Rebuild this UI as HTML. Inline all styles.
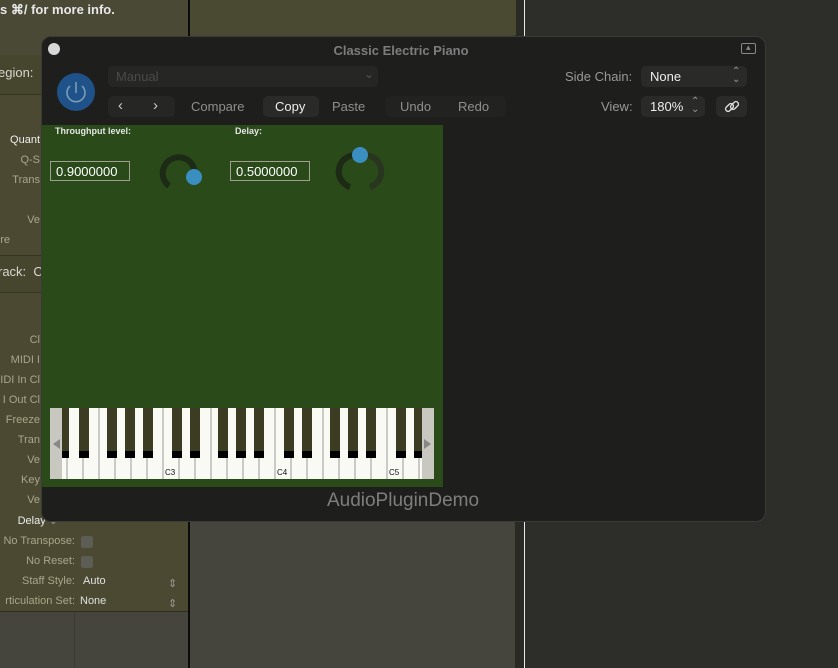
<!DOCTYPE html>
<html><head><meta charset="utf-8"><style>
*{margin:0;padding:0;box-sizing:border-box}
body{width:838px;height:668px;overflow:hidden;background:#2c2c27;font-family:"Liberation Sans",sans-serif;position:relative}
.a{position:absolute}
.lbl{position:absolute;color:#a9a68c;font-size:11px;text-align:right;white-space:nowrap}
.bt{position:absolute;color:#8f8f8f;font-size:13px}
</style></head><body>
<div class="a" style="left:0;top:0;width:188px;height:612px;background:#4b4932"></div>
<div class="a" style="left:0;top:612px;width:188px;height:56px;background:#46453d"></div>
<div class="a" style="left:74px;top:612px;width:1px;height:56px;background:#3a3a33"></div>
<div class="a" style="left:0;top:611px;width:188px;height:1px;background:#2e2d22"></div>
<div class="a" style="left:188px;top:0;width:2px;height:668px;background:#0c0c0a"></div>
<div class="a" style="left:190px;top:0;width:325px;height:668px;background:#45443d"></div>
<div class="a" style="left:515px;top:0;width:9px;height:668px;background:#2a2a25"></div>
<div class="a" style="left:524px;top:0;width:1px;height:668px;background:#e8e8e8"></div>
<div class="a" style="left:525px;top:0;width:313px;height:668px;background:#2d2d29"></div>
<div class="a" style="left:190px;top:0;width:326px;height:35px;background:#4a4932"></div>
<div class="a" style="left:0;top:0;width:188px;height:55px;background:#4a4935"></div>
<div class="a" style="left:0;top:2px;color:#e8e8e8;font-size:13px;font-weight:bold">s ⌘/ for more info.</div>
<div class="a" style="left:0;top:55px;width:188px;height:40px;background:#46452e;border-bottom:1px solid #36351f"></div>
<div class="a" style="left:-2px;top:65px;color:#d8d8d0;font-size:13px">egion:</div>
<div class="a" style="left:0;top:255px;width:188px;height:38px;background:#46452e;border-top:1px solid #36351f;border-bottom:1px solid #36351f"></div>
<div class="a" style="left:-2px;top:264px;color:#d8d8d0;font-size:13px">rack:&nbsp; C</div>
<div class="lbl" style="left:0;width:40px;top:134px;color:#eee">Quant</div>
<div class="lbl" style="left:0;width:40px;top:154px">Q-S</div>
<div class="lbl" style="left:0;width:40px;top:174px">Trans</div>
<div class="lbl" style="left:0;width:40px;top:214px">Ve</div>
<div class="lbl" style="left:0;width:10px;top:234px">re</div>
<div class="lbl" style="left:0;width:40px;top:334px">Cl</div>
<div class="lbl" style="left:0;width:40px;top:354px">MIDI I</div>
<div class="lbl" style="left:0;width:40px;top:374px">IDI In Cl</div>
<div class="lbl" style="left:0;width:40px;top:394px">I Out Cl</div>
<div class="lbl" style="left:0;width:40px;top:414px">Freeze</div>
<div class="lbl" style="left:0;width:40px;top:434px">Tran</div>
<div class="lbl" style="left:0;width:40px;top:454px">Ve</div>
<div class="lbl" style="left:0;width:40px;top:474px">Key</div>
<div class="lbl" style="left:0;width:40px;top:494px">Ve</div>
<div class="lbl" style="left:0;width:58px;top:514px;color:#eee">Delay <span style="color:#999">⌄</span></div>
<div class="lbl" style="left:0;width:75px;top:535px">No Transpose:</div>
<div class="a" style="left:81px;top:536px;width:12px;height:12px;background:#5d5c55;border-radius:2px"></div>
<div class="lbl" style="left:0;width:75px;top:555px">No Reset:</div>
<div class="a" style="left:81px;top:556px;width:12px;height:12px;background:#5d5c55;border-radius:2px"></div>
<div class="lbl" style="left:0;width:75px;top:575px">Staff Style:</div>
<div class="a" style="left:83px;top:575px;color:#e0e0e0;font-size:11px">Auto</div>
<div class="lbl" style="left:0;width:75px;top:595px">rticulation Set:</div>
<div class="a" style="left:80px;top:595px;color:#e0e0e0;font-size:11px">None</div>
<div class="a" style="left:168px;top:574px;color:#999;font-size:11px;line-height:20px">⇕<br>⇕</div>

<div class="a" style="left:41px;top:36px;width:725px;height:486px;background:#1e1e1c;border-radius:10px;border:1px solid #3a3a36"></div>
<div class="a" style="left:48px;top:43px;width:12px;height:12px;border-radius:50%;background:#d8d8d8"></div>
<div class="a" style="left:0;width:800px;top:43px;text-align:center;color:#7d7d7d;font-size:13px;font-weight:bold;padding-left:2px">Classic Electric Piano</div>
<div class="a" style="left:741px;top:43px;width:15px;height:11px;border:1.5px solid #888;border-radius:2px"></div>
<div class="a" style="left:746px;top:42px;color:#888;font-size:9px">▴</div>
<div class="a" style="left:57px;top:73px;width:38px;height:38px;border-radius:50%;background:#1f5288"></div>
<svg class="a" style="left:57px;top:73px" width="38" height="38"><path d="M13 13 A9 9 0 1 0 25 13" fill="none" stroke="#7a9cb8" stroke-width="1.6"/><line x1="19" y1="9" x2="19" y2="20" stroke="#7a9cb8" stroke-width="1.6"/></svg>
<div class="a" style="left:108px;top:66px;width:270px;height:21px;background:#262624;border-radius:5px"></div>
<div class="a" style="left:116px;top:69px;color:#4a4a48;font-size:13px">Manual</div>
<div class="a" style="left:364px;top:67px;color:#555;font-size:12px">⌄</div>
<div class="a" style="left:108px;top:96px;width:67px;height:21px;background:#262624;border-radius:5px"></div>
<div class="bt" style="left:118px;top:97px;color:#ccc;font-size:15px">‹</div>
<div class="bt" style="left:153px;top:97px;color:#ccc;font-size:15px">›</div>
<div class="bt" style="left:191px;top:99px">Compare</div>
<div class="a" style="left:263px;top:96px;width:56px;height:21px;background:#2a2a28;border-radius:5px"></div>
<div class="bt" style="left:275px;top:99px;color:#eee">Copy</div>
<div class="bt" style="left:332px;top:99px">Paste</div>
<div class="a" style="left:385px;top:96px;width:121px;height:21px;background:#222220;border-radius:5px"></div>
<div class="bt" style="left:400px;top:99px">Undo</div>
<div class="bt" style="left:458px;top:99px">Redo</div>
<div class="bt" style="left:565px;top:69px;color:#999">Side Chain:</div>
<div class="a" style="left:641px;top:66px;width:106px;height:21px;background:#2a2a28;border-radius:5px"></div>
<div class="bt" style="left:650px;top:69px;color:#eee">None</div>
<div class="a" style="left:732px;top:68px;color:#999;font-size:10px;line-height:8px">⌃<br>⌄</div>
<div class="bt" style="left:601px;top:99px;color:#999">View:</div>
<div class="a" style="left:641px;top:96px;width:64px;height:21px;background:#2a2a28;border-radius:5px"></div>
<div class="bt" style="left:650px;top:99px;color:#eee">180%</div>
<div class="a" style="left:691px;top:98px;color:#999;font-size:10px;line-height:8px">⌃<br>⌄</div>
<div class="a" style="left:716px;top:96px;width:31px;height:21px;background:#2a2a28;border-radius:5px"></div>
<svg class="a" style="left:724px;top:99px" width="16" height="16"><g fill="none" stroke="#ddd" stroke-width="1.4"><rect x="1" y="6" width="9" height="5" rx="2.5" transform="rotate(-45 5.5 8.5)"/><rect x="6" y="4" width="9" height="5" rx="2.5" transform="rotate(-45 10.5 6.5)"/></g></svg>

<div class="a" style="left:42px;top:125px;width:401px;height:362px;background:#2a4a1a"></div>
<div class="a" style="left:55px;top:126px;color:#e6e6e6;font-size:9px;font-weight:bold">Throughput level:</div>
<div class="a" style="left:235px;top:126px;color:#e6e6e6;font-size:9px;font-weight:bold">Delay:</div>
<div class="a" style="left:50px;top:161px;width:80px;height:20px;border:1px solid #a0a090;color:#fff;font-size:13px;padding:2px 0 0 5px">0.9000000</div>
<div class="a" style="left:230px;top:161px;width:80px;height:20px;border:1px solid #a0a090;color:#fff;font-size:13px;padding:2px 0 0 5px">0.5000000</div>
<svg class="a" style="left:150px;top:140px" width="240" height="60">
<path d="M19 46 A16 16 0 1 1 44 38" fill="none" stroke="#1c2a16" stroke-width="6"/>
<circle cx="44" cy="37" r="8" fill="#3a8fc0"/>
<path d="M200 47 A16 16 0 0 1 210 16" fill="none" stroke="#1c2a16" stroke-width="6"/>
<path d="M210 16 A16 16 0 0 1 220 47" fill="none" stroke="#28361f" stroke-width="6"/>
<circle cx="210" cy="15" r="8" fill="#3a8fc0"/>
</svg>
<div class="a" style="left:50px;top:408px;width:384px;height:71px;background:#fafaf4;overflow:hidden">
<svg width="384" height="71">
<rect x="0" y="0" width="12" height="71" fill="#c8c8c0"/>
<rect x="372" y="0" width="12" height="71" fill="#c8c8c0"/>
<path d="M3 36 L10 31 L10 41Z" fill="#888"/>
<path d="M381 36 L374 31 L374 41Z" fill="#888"/>
<g stroke="#999" stroke-width="1">
<line x1="17" y1="0" x2="17" y2="71"/><line x1="33" y1="0" x2="33" y2="71"/><line x1="49" y1="0" x2="49" y2="71"/><line x1="65" y1="0" x2="65" y2="71"/><line x1="81" y1="0" x2="81" y2="71"/><line x1="97" y1="0" x2="97" y2="71"/><line x1="113" y1="0" x2="113" y2="71"/><line x1="129" y1="0" x2="129" y2="71"/><line x1="145" y1="0" x2="145" y2="71"/><line x1="161" y1="0" x2="161" y2="71"/><line x1="177" y1="0" x2="177" y2="71"/><line x1="193" y1="0" x2="193" y2="71"/><line x1="209" y1="0" x2="209" y2="71"/><line x1="225" y1="0" x2="225" y2="71"/><line x1="241" y1="0" x2="241" y2="71"/><line x1="257" y1="0" x2="257" y2="71"/><line x1="273" y1="0" x2="273" y2="71"/><line x1="289" y1="0" x2="289" y2="71"/><line x1="305" y1="0" x2="305" y2="71"/><line x1="321" y1="0" x2="321" y2="71"/><line x1="337" y1="0" x2="337" y2="71"/><line x1="353" y1="0" x2="353" y2="71"/><line x1="369" y1="0" x2="369" y2="71"/>
</g>
<g fill="#3c3c22">
<rect x="12" y="0" width="7" height="50"/><rect x="29" y="0" width="10" height="50"/><rect x="57" y="0" width="10" height="50"/><rect x="75" y="0" width="10" height="50"/><rect x="93" y="0" width="10" height="50"/>
<rect x="122" y="0" width="10" height="50"/><rect x="140" y="0" width="10" height="50"/><rect x="168" y="0" width="10" height="50"/><rect x="186" y="0" width="10" height="50"/><rect x="204" y="0" width="10" height="50"/>
<rect x="234" y="0" width="10" height="50"/><rect x="252" y="0" width="10" height="50"/><rect x="280" y="0" width="10" height="50"/><rect x="298" y="0" width="10" height="50"/><rect x="316" y="0" width="10" height="50"/>
<rect x="346" y="0" width="10" height="50"/><rect x="364" y="0" width="8" height="50"/>
</g>
<g fill="#000">
<rect x="12" y="43" width="7" height="7"/><rect x="29" y="43" width="10" height="7"/><rect x="57" y="43" width="10" height="7"/><rect x="75" y="43" width="10" height="7"/><rect x="93" y="43" width="10" height="7"/>
<rect x="122" y="43" width="10" height="7"/><rect x="140" y="43" width="10" height="7"/><rect x="168" y="43" width="10" height="7"/><rect x="186" y="43" width="10" height="7"/><rect x="204" y="43" width="10" height="7"/>
<rect x="234" y="43" width="10" height="7"/><rect x="252" y="43" width="10" height="7"/><rect x="280" y="43" width="10" height="7"/><rect x="298" y="43" width="10" height="7"/><rect x="316" y="43" width="10" height="7"/>
<rect x="346" y="43" width="10" height="7"/><rect x="364" y="43" width="8" height="7"/>
</g>
<g font-family="Liberation Sans" font-size="8" fill="#111"><text x="115" y="67">C3</text><text x="227" y="67">C4</text><text x="339" y="67">C5</text></g>
</svg></div>
<div class="a" style="left:0;width:806px;top:490px;text-align:center;color:#7e7e7e;font-size:19px">AudioPluginDemo</div>
</body></html>
